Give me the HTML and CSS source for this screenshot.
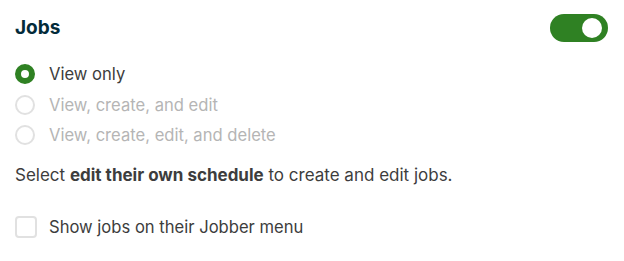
FILE: index.html
```html
<!DOCTYPE html>
<html lang="en">

<head>
  <meta charset="UTF-8">
  <meta name="viewport" content="width=device-width, initial-scale=1.0">
  <title>Jobs</title>
  <link rel="stylesheet" href="styles.css">
</head>

<body>
  <div class="section">
    <div class="header">
      <h2 class="title">Jobs</h2>
      <button type="button" class="switch on" aria-pressed="true"><span class="knob"></span></button>
    </div>

    <ul class="options">
      <li class="option checked"><span class="radio"></span>View only</li>
      <li class="option disabled"><span class="radio"></span>View, create, and edit</li>
      <li class="option disabled"><span class="radio"></span>View, create, edit, and delete</li>
    </ul>

    <p class="hint">Select <b>edit their own schedule</b> to create and edit jobs.</p>

    <label class="check"><span class="box"></span>Show jobs on their Jobber menu</label>
  </div>
</body>

</html>
```

FILE: styles.css
```css
body {
  margin: 0;
  font-family: Inter, "Noto Sans", sans-serif;
  color: #3d3d3d;
  background: #fff;
}

.section {
  padding: 13px 16px 0 15px;
}

.header {
  display: flex;
  justify-content: space-between;
  align-items: center;
  height: 29px;
}

.title {
  margin: 0;
  font-size: 19px;
  font-weight: 700;
  color: #032b3a;
}

.switch {
  width: 58px;
  height: 28px;
  border: none;
  border-radius: 14px;
  background-color: #2f8123;
  padding: 0;
  display: flex;
  align-items: center;
  justify-content: flex-end;
  padding-right: 6px;
  cursor: pointer;
}

.knob {
  width: 20px;
  height: 20px;
  border-radius: 100%;
  background: #fff;
}

.options {
  list-style: none;
  padding-left: 0;
  margin: 17px 0 0 0;
}

.option {
  display: flex;
  align-items: center;
  height: 30.5px;
  font-size: 16.6px;
}

.radio {
  width: 20px;
  height: 20px;
  box-sizing: border-box;
  border-radius: 100%;
  border: 2px solid #e1e1e1;
  margin-right: 14px;
}

.option.checked .radio {
  border: 6px solid #2f8123;
}

.option.disabled {
  color: #b5b5b5;
}

.hint {
  margin: 14px 0 0 0;
  font-size: 17px;
}

.hint b {
  font-weight: 700;
}

.check {
  display: flex;
  align-items: center;
  margin-top: 31px;
  font-size: 16.6px;
}

.box {
  width: 22px;
  height: 22px;
  box-sizing: border-box;
  border: 2px solid #e1e1e1;
  border-radius: 4px;
  margin-right: 12px;
}
```
